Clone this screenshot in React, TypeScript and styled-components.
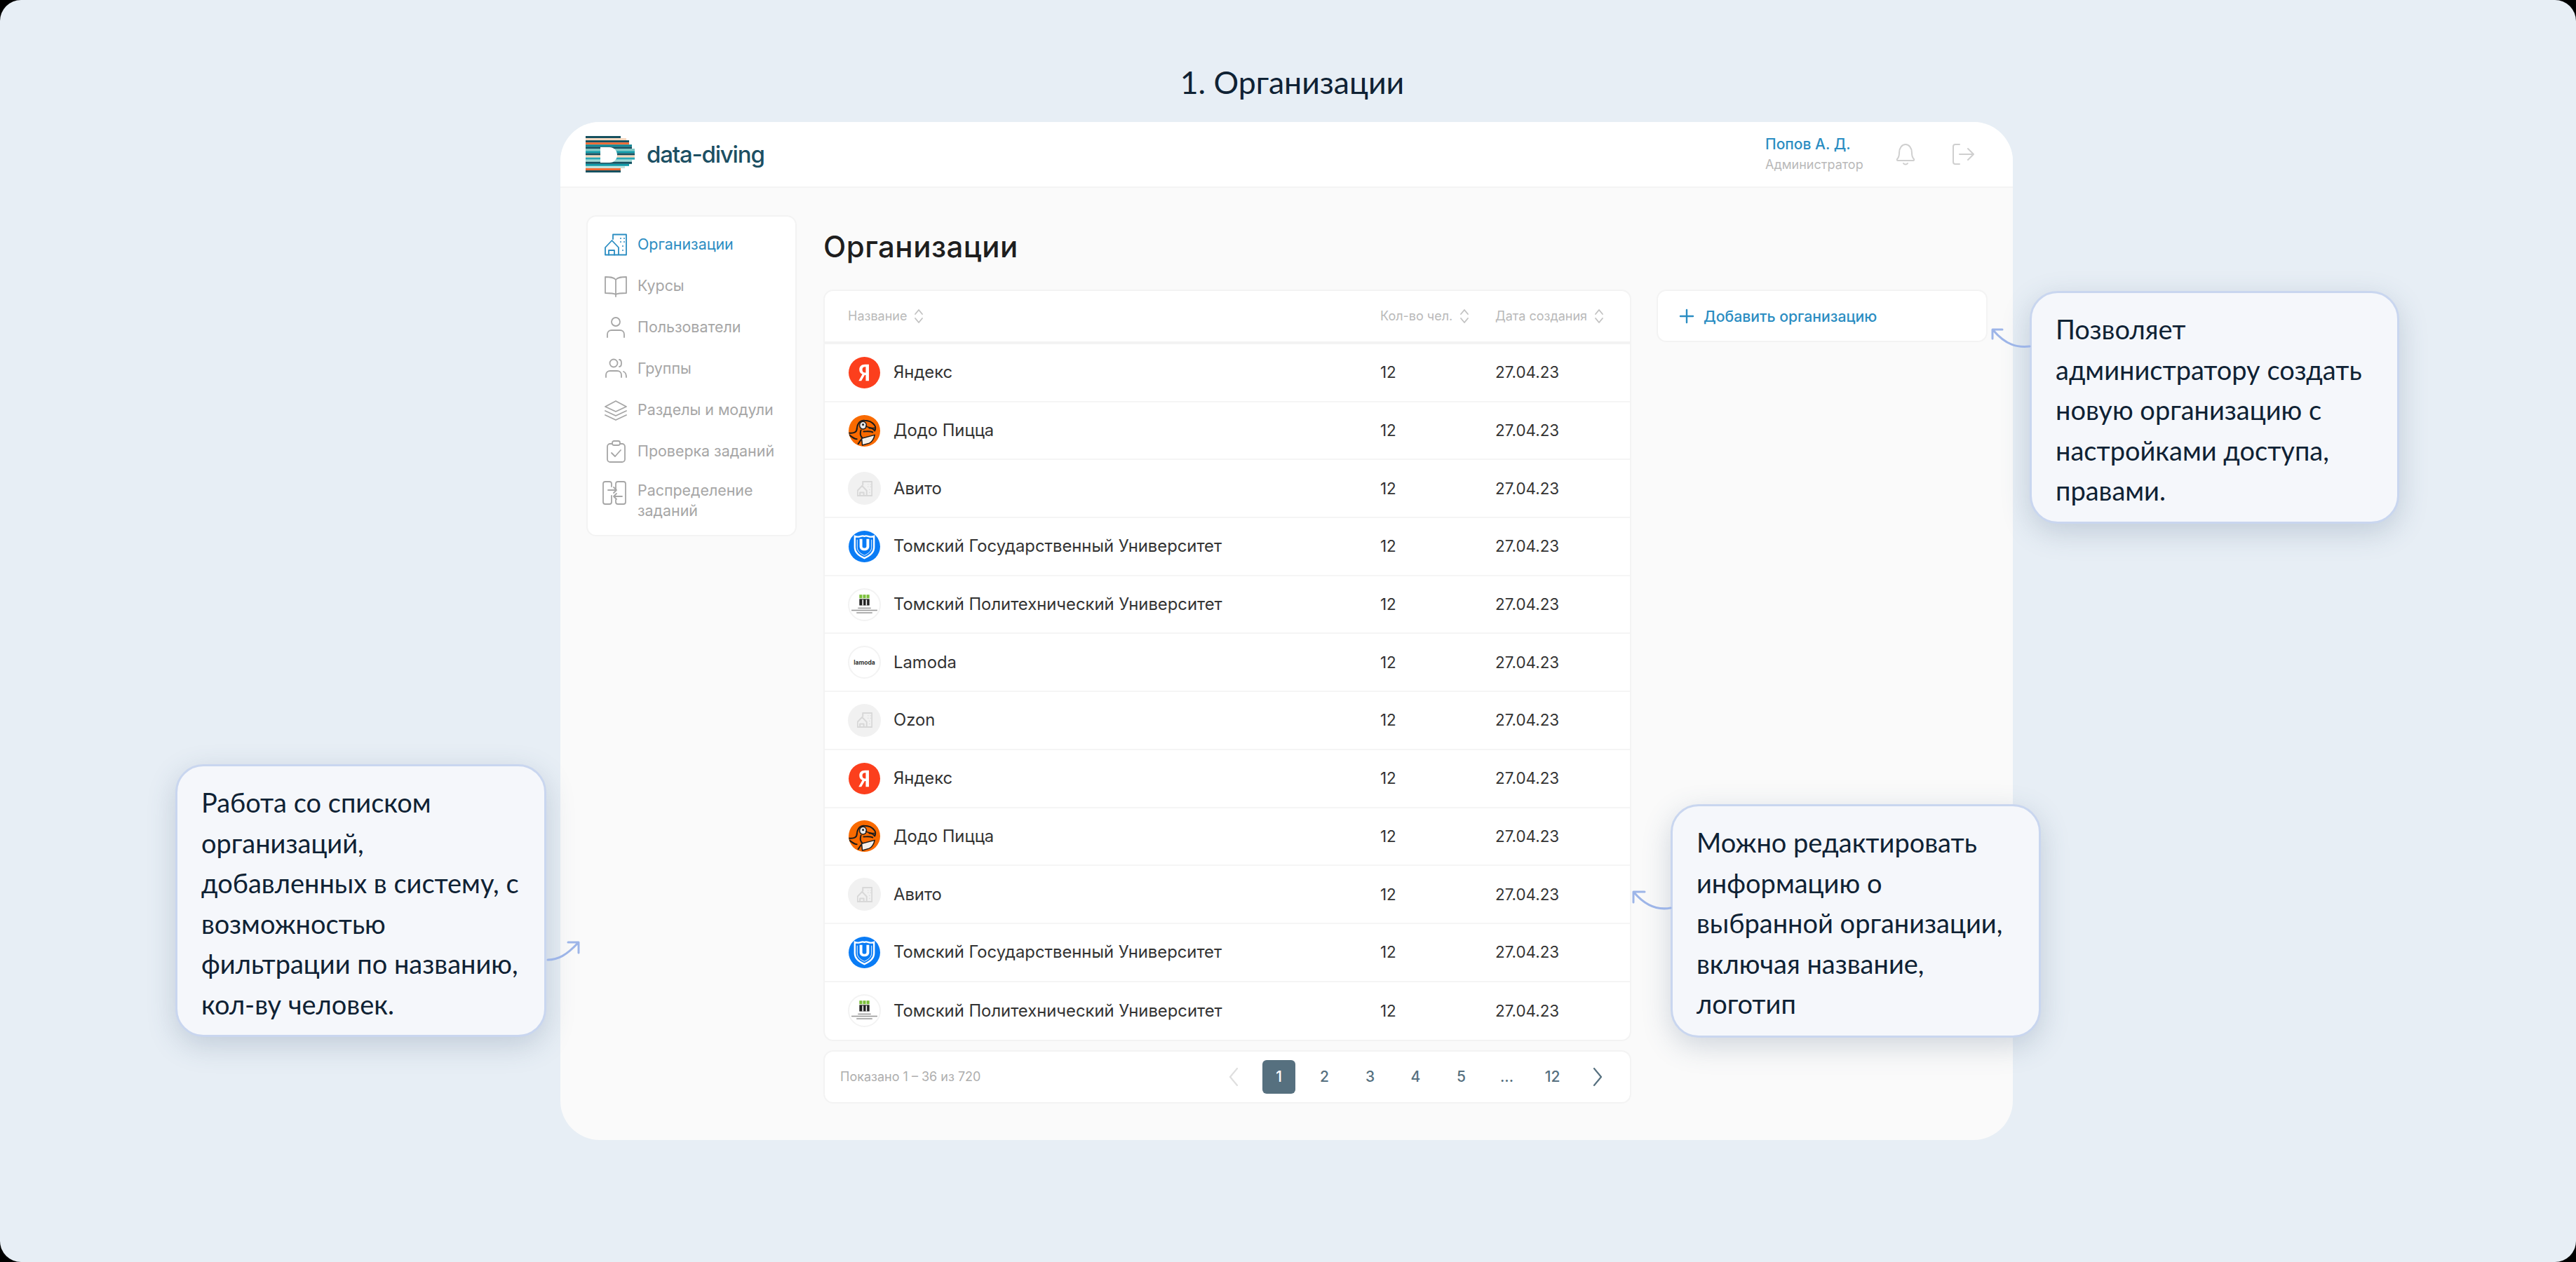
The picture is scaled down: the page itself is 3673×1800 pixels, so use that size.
import React from "react";
import styled, { createGlobalStyle } from "styled-components";

const Global = createGlobalStyle`
  html, body { margin: 0; padding: 0; background: #000; }
  * { box-sizing: border-box; }
`;

const ui = `Inter, "Noto Sans", sans-serif`;

const Page = styled.div`
  position: relative;
  width: 3673px;
  height: 1800px;
  background: #e7eef5;
  border-radius: 30px;
  overflow: hidden;
  display: flex;
  flex-direction: column;
  align-items: center;
`;
const PageTitle = styled.h1`
  margin: 0;
  padding: 90px 0 0 12px;
  height: 174px;
  font: 400 44.6px/54px Lato, sans-serif;
  color: #0f2234;
`;
const Frame = styled.div`
  width: 2071px;
  height: 1452px;
  margin-right: 4px;
  border-radius: 56px;
  background: #fafafa;
  overflow: hidden;
  display: flex;
  flex-direction: column;
`;
const Header = styled.header`
  height: 94px;
  flex: none;
  background: #fff;
  border-bottom: 2px solid #f4f4f4;
  display: flex;
  align-items: center;
  padding: 0 30px 0 36px;
`;
const Brand = styled.div`
  display: flex;
  align-items: center;
  gap: 17px;
  flex: 1;
  font: 500 33px/44px Inter, sans-serif;
  letter-spacing: -1.2px;
  color: #1c4f63;
`;
const User = styled.div`
  display: flex;
  flex-direction: column;
  gap: 4px;
  width: 159px;
`;
const UserName = styled.div`
  font: 500 21px/26px ${ui};
  color: #2b8dc2;
`;
const UserRole = styled.div`
  font: 400 18px/24px ${ui};
  color: #b9b9b9;
`;
const HeaderIcon = styled.div`
  width: 82px;
  display: flex;
  justify-content: center;
  color: #cfcfcf;
`;
const Body = styled.div`
  flex: 1;
  display: flex;
  padding: 39px 37px 0 37px;
`;
const Side = styled.nav`
  width: 300px;
  height: 458px;
  flex: none;
  background: #fff;
  border: 2px solid #f3f3f3;
  border-radius: 14px;
  padding: 10px 0 0 24px;
  display: flex;
  flex-direction: column;
`;
const NavItem = styled.div<{ $active?: boolean; $tall?: boolean }>`
  display: flex;
  align-items: ${(p) => (p.$tall ? "flex-start" : "center")};
  gap: 15px;
  height: ${(p) => (p.$tall ? 76 : 59)}px;
  padding-top: ${(p) => (p.$tall ? 12 : 0)}px;
  font: 400 21.4px/29px ${ui};
  color: ${(p) => (p.$active ? "#2b8dc2" : "#a6a6a6")};
  svg {
    flex: none;
    margin-left: ${(p) => (p.$tall ? -4 : 0)}px;
  }
`;
const Main = styled.main`
  width: 1152px;
  margin-left: 38px;
  flex: none;
`;
const Title = styled.h2`
  margin: 0;
  height: 106px;
  padding-top: 17px;
  font: 500 42px/56px ${ui};
  letter-spacing: 0.5px;
  color: #1e1e1e;
`;
const Table = styled.div`
  background: #fff;
  border: 2px solid #f3f3f3;
  border-radius: 14px;
  overflow: hidden;
`;
const Grid = styled.div`
  display: grid;
  grid-template-columns: 759px 164px 1fr;
  align-items: center;
  padding-left: 33px;
`;
const HeadRow = styled(Grid)`
  height: 76px;
  border-bottom: 4px solid #f3f3f3;
  font: 400 18px/24px ${ui};
  color: #b9b9b9;
`;
const HeadCell = styled.div`
  display: flex;
  align-items: center;
  gap: 10px;
`;
const Row = styled(Grid)`
  height: 82.7px;
  border-bottom: 2px solid #f5f5f5;
  font: 400 23.8px/30px ${ui};
  color: #333;
  &:last-child { border-bottom: 0; }
`;
const NameCell = styled.div`
  display: flex;
  align-items: center;
  gap: 18px;
`;
const Num = styled.div`
  font-size: 22.4px;
`;
const Pager = styled.div`
  margin-top: 13px;
  height: 76px;
  background: #fff;
  border: 2px solid #f3f3f3;
  border-radius: 14px;
  display: flex;
  align-items: center;
  justify-content: space-between;
  padding: 0 22px 0 22px;
`;
const PagerInfo = styled.div`
  font: 400 18px/24px ${ui};
  color: #aeaeae;
`;
const Pages = styled.div`
  display: flex;
  align-items: center;
  gap: 18px;
`;
const PageBtn = styled.div<{ $active?: boolean }>`
  width: 47px;
  height: 48px;
  border-radius: 6px;
  display: flex;
  align-items: center;
  justify-content: center;
  font: 500 21px/26px ${ui};
  background: ${(p) => (p.$active ? "#56707f" : "transparent")};
  color: ${(p) => (p.$active ? "#fff" : "#56707f")};
`;
const Aside = styled.div`
  width: 472px;
  height: 75px;
  flex: none;
  margin: 106px 0 0 36px;
  background: #fff;
  border: 2px solid #f3f3f3;
  border-radius: 14px;
  display: flex;
  align-items: center;
  gap: 13px;
  padding-left: 30px;
  font: 500 21.2px/28px ${ui};
  color: #2b8dc2;
`;
const Note = styled.div<{ $x: number; $y: number; $w: number; $h: number }>`
  position: absolute;
  left: ${(p) => p.$x}px;
  top: ${(p) => p.$y}px;
  width: ${(p) => p.$w}px;
  height: ${(p) => p.$h}px;
  background: #f5f7fb;
  border: 3px solid #c9d6ef;
  border-radius: 40px;
  box-shadow: 0 12px 40px rgba(60, 85, 120, 0.22);
  padding: 23px 24px 0 34px;
  font: 400 38px/57.6px Lato, sans-serif;
  color: #0f2234;
`;
const Arrow = styled.svg<{ $x: number; $y: number }>`
  position: absolute;
  left: ${(p) => p.$x}px;
  top: ${(p) => p.$y}px;
`;

const stripes = ["#15505f","#f7d9c0","#15505f","#f26a33","#0f8796","#15505f","#7cc8c4","#0f9aa8","#15505f","#f5d6b8","#2aa7b5","#9fdad6","#15505f","#0f9aa8","#bfe6e2","#f26a33","#15505f"];

const Logo = () => (
  <svg width="70" height="52" viewBox="0 0 70 52">
    <defs>
      <clipPath id="dshape">
        <path fillRule="evenodd" clipRule="evenodd" d="M0 0H50V3H58V6H62V12H66V18H70V34H66V40H62V43H56V46H50V52H0ZM21 16V38H34C41 38 45 33 45 27C45 21 41 16 34 16Z" />
      </clipPath>
    </defs>
    <g clipPath="url(#dshape)">
      {stripes.map((c, i) => (
        <rect key={i} x="0" y={i * 3.06} width="70" height="3.1" fill={c} />
      ))}
    </g>
  </svg>
);

const Stroke = (p: { size?: number; vb?: number; children: React.ReactNode; w?: number }) => (
  <svg width={p.size ?? 32} height={p.size ?? 32} viewBox={`0 0 ${p.vb ?? 32} ${p.vb ?? 32}`} fill="none" stroke="currentColor" strokeWidth={p.w ?? 1.8} strokeLinecap="round" strokeLinejoin="round">
    {p.children}
  </svg>
);

const OrgIcon = ({ size = 32, w = 1.8 }: { size?: number; w?: number }) => (
  <Stroke size={size} w={w}>
    <path d="M12 8V1.500H31V30.500H1V20L10.500 10L20 20V30.500" />
    <path d="M6 30.500V24H14V30.500" />
    <path d="M23 7h.01M28 7h.01M23 12h.01M28 12h.01M26 18h.01M26 24h.01" strokeWidth="2" />
  </Stroke>
);

const icons: Record<string, React.ReactNode> = {
  org: <OrgIcon />,
  book: (
    <Stroke>
      <path d="M16 7C13 3 7 3 1 3V26C7 26 13 26 16 28C19 26 25 26 31 26V3C25 3 19 3 16 7ZM16 7V31" />
    </Stroke>
  ),
  user: (
    <Stroke>
      <circle cx="16" cy="8" r="6" />
      <path d="M4 30V26C4 22 7 20 10 20H22C25 20 28 22 28 26V30" />
    </Stroke>
  ),
  group: (
    <Stroke>
      <circle cx="13" cy="8" r="5.500" />
      <path d="M2 28V25C2 21 5 19 8 19H18C21 19 24 21 24 25V28M21 3C25 3 25 13 21 13M27 20C30 21 31 24 31 28" />
    </Stroke>
  ),
  layers: (
    <Stroke>
      <path d="M16 3L31 11L16 18L1 11Z" />
      <path d="M1 17L16 24L31 17M1 23L16 30L31 23" />
    </Stroke>
  ),
  check: (
    <Stroke>
      <rect x="4" y="5" width="25" height="26" rx="4" />
      <rect x="11" y="1" width="11" height="6" rx="2.500" fill="#fff" />
      <path d="M10 18L15 23L23 14" />
    </Stroke>
  ),
  swap: (
    <Stroke size={36} vb={36}>
      <path d="M14 9V5C14 3 13 2 11 2H5C3 2 2 3 2 5V31C2 33 3 34 5 34H11C13 34 14 33 14 31V22" />
      <path d="M20 14V5C20 3 21 2 23 2H31C33 2 34 3 34 5V31C34 33 33 34 31 34H23C21 34 20 33 20 31V28" />
      <path d="M9 14H21M17 10L21 14L17 18M29 23H17M21 19L17 23L21 27" />
    </Stroke>
  ),
};

const nav = [
  { i: "org", t: "Организации", a: true },
  { i: "book", t: "Курсы" },
  { i: "user", t: "Пользователи" },
  { i: "group", t: "Группы" },
  { i: "layers", t: "Разделы и модули" },
  { i: "check", t: "Проверка заданий" },
];

const Avatar = styled.div<{ $bg: string; $ring?: boolean; $small?: boolean }>`
  width: ${(p) => (p.$small ? 45 : 47)}px;
  height: ${(p) => (p.$small ? 45 : 47)}px;
  margin: 0 ${(p) => (p.$small ? 1 : 0)}px;
  flex: none;
  border-radius: 50%;
  background: ${(p) => p.$bg};
  border: ${(p) => (p.$ring ? "2px solid #f3f3f3" : "0")};
  display: flex;
  align-items: center;
  justify-content: center;
  overflow: hidden;
  color: #d8d8d8;
`;

const YandexLogo = () => (
  <Avatar $bg="#fc3f1d" $small>
    <svg width="45" height="45" viewBox="0 0 46 46">
      <path fill="#fff" d="M25 35V26.500H23.400L18.600 35H14.600L20 25.400C17.200 24.200 15.600 21.800 15.600 18.600C15.600 13.800 18.800 11 24 11H29.600V35ZM25 14.600H24C21.400 14.600 20 16 20 18.600C20 21.400 21.400 22.900 24.200 22.900H25Z" />
    </svg>
  </Avatar>
);
const DodoLogo = () => (
  <Avatar $bg="#f96a00" $small>
    <svg width="45" height="45" viewBox="0 0 46 46" fill="none" strokeLinejoin="round" strokeLinecap="round">
      <path d="M19 34L38 29C37 35 33 40 30 41L20 44Z" fill="#f4efe8" stroke="#1b1b1b" strokeWidth="1.500" />
      <path d="M12 20C13 11 18 7 23 8C29 8 35 11 38 15C40 18 39 21 38 23C36 20 34 19 30 19" stroke="#1b1b1b" strokeWidth="2" />
      <ellipse cx="21" cy="15" rx="5" ry="5.500" fill="#e8e8e8" stroke="#1b1b1b" strokeWidth="1.500" />
      <circle cx="21" cy="14" r="1.500" fill="#1b1b1b" />
      <path d="M25 16C28 18 34 19 38 19" stroke="#1b1b1b" strokeWidth="1.500" />
      <path d="M12 20C12 25 8 27 0 26M1 29C5 32 8 35 12 35M22 24C26 24 31 23 35 25M18 22C16 28 18 32 20 33M18 36L14 42" stroke="#1b1b1b" strokeWidth="2" />
    </svg>
  </Avatar>
);
const GhostLogo = () => (
  <Avatar $bg="#f1f1f1">
    <OrgIcon size={22} w={3} />
  </Avatar>
);
const TsuLogo = () => (
  <Avatar $bg="#0a7cf5" $small>
    <svg width="45" height="45" viewBox="0 0 46 46" fill="none">
      <path d="M9 8C15 11 18 6 23 8C28 6 31 11 37 8V24C37 32 30 37 23 40C16 37 9 32 9 24Z" stroke="#fff" strokeWidth="2.400" />
      <path d="M12.500 13V24C12.500 30 18 34 23 36C28 34 33.500 30 33.500 24V13" stroke="#fff" strokeWidth="1" />
      <path d="M16 12V23C16 31 30 31 30 23V12H26V23C26 26 20 26 20 23V12Z" fill="#fff" />
    </svg>
  </Avatar>
);
const TpuLogo = () => (
  <Avatar $bg="#fff" $ring>
    <svg width="43" height="43" viewBox="0 0 42 42">
      <rect x="14" y="7" width="4" height="5" fill="#7bbf3a" />
      <rect x="19" y="7" width="4" height="5" fill="#7bbf3a" />
      <rect x="24" y="7" width="4" height="5" fill="#7bbf3a" />
      <rect x="14" y="13" width="14" height="9" fill="#222" />
      <rect x="18" y="14" width="1.600" height="8" fill="#fff" />
      <rect x="23" y="14" width="1.600" height="8" fill="#fff" />
      <rect x="12" y="25" width="18" height="1.500" fill="#999" />
      <rect x="3" y="28" width="36" height="1.600" fill="#999" />
      <rect x="10" y="31.500" width="22" height="1.500" fill="#999" />
    </svg>
  </Avatar>
);
const LamodaMark = styled.span`
  font: 700 8.5px/10px ${ui};
  color: #333;
`;
const LamodaLogo = () => (
  <Avatar $bg="#fff" $ring>
    <LamodaMark>lamoda</LamodaMark>
  </Avatar>
);

const rows: [React.ReactNode, string][] = [
  [<YandexLogo />, "Яндекс"],
  [<DodoLogo />, "Додо Пицца"],
  [<GhostLogo />, "Авито"],
  [<TsuLogo />, "Томский Государственный Университет"],
  [<TpuLogo />, "Томский Политехнический Университет"],
  [<LamodaLogo />, "Lamoda"],
  [<GhostLogo />, "Ozon"],
  [<YandexLogo />, "Яндекс"],
  [<DodoLogo />, "Додо Пицца"],
  [<GhostLogo />, "Авито"],
  [<TsuLogo />, "Томский Государственный Университет"],
  [<TpuLogo />, "Томский Политехнический Университет"],
];

const Sort = () => (
  <svg width="14" height="22" viewBox="0 0 14 22" fill="none" stroke="#c2c2c2" strokeWidth="1.800" strokeLinecap="round" strokeLinejoin="round">
    <path d="M2 8L7 2L12 8M2 14L7 20L12 14" />
  </svg>
);

const Chevron = ({ d, color }: { d: string; color: string }) => (
  <svg width="47" height="48" viewBox="0 0 47 48" fill="none" stroke={color} strokeWidth="2.200" strokeLinecap="round" strokeLinejoin="round">
    <path d={d} />
  </svg>
);

const CurveArrow = (p: { x: number; y: number; d: string; w: number; h: number }) => (
  <Arrow $x={p.x} $y={p.y} width={p.w} height={p.h} viewBox={`0 0 ${p.w} ${p.h}`} fill="none" stroke="#9db5e8" strokeWidth="3" strokeLinecap="round" strokeLinejoin="round">
    <path d={p.d} />
  </Arrow>
);

export default function App() {
  return (
    <Page>
      <Global />
      <PageTitle>1. Организации</PageTitle>
      <Frame>
        <Header>
          <Brand>
            <Logo />
            data-diving
          </Brand>
          <User>
            <UserName>Попов А. Д.</UserName>
            <UserRole>Администратор</UserRole>
          </User>
          <HeaderIcon>
            <Stroke size={34} vb={34} w={2}>
              <path d="M5 24C7 22 8 19 8 15C8 8 12 3 17 3C22 3 26 8 26 15C26 19 27 22 29 24C29.500 25 29 26 28 26H6C5 26 4.500 25 5 24Z" />
              <path d="M14 30C15.500 32 18.500 32 20 30" />
            </Stroke>
          </HeaderIcon>
          <HeaderIcon>
            <Stroke size={34} vb={34} w={2}>
              <path d="M12 3H6C4 3 3 4 3 6V28C3 30 4 31 6 31H12" />
              <path d="M12 17H32M24 9L32 17L24 25" />
            </Stroke>
          </HeaderIcon>
        </Header>
        <Body>
          <Side>
            {nav.map((n) => (
              <NavItem key={n.t} $active={n.a}>
                {icons[n.i]}
                {n.t}
              </NavItem>
            ))}
            <NavItem $tall>
              {icons.swap}
              <span>Распределение заданий</span>
            </NavItem>
          </Side>
          <Main>
            <Title>Организации</Title>
            <Table>
              <HeadRow>
                <HeadCell>Название <Sort /></HeadCell>
                <HeadCell>Кол-во чел. <Sort /></HeadCell>
                <HeadCell>Дата создания <Sort /></HeadCell>
              </HeadRow>
              {rows.map(([logo, name], i) => (
                <Row key={i}>
                  <NameCell>
                    {logo}
                    {name}
                  </NameCell>
                  <Num>12</Num>
                  <Num>27.04.23</Num>
                </Row>
              ))}
            </Table>
            <Pager>
              <PagerInfo>Показано 1 – 36 из 720</PagerInfo>
              <Pages>
                <Chevron d="M29 12L19 24L29 36" color="#dfdfdf" />
                <PageBtn $active>1</PageBtn>
                <PageBtn>2</PageBtn>
                <PageBtn>3</PageBtn>
                <PageBtn>4</PageBtn>
                <PageBtn>5</PageBtn>
                <PageBtn>...</PageBtn>
                <PageBtn>12</PageBtn>
                <Chevron d="M18 12L28 24L18 36" color="#56707f" />
              </Pages>
            </Pager>
          </Main>
          <Aside>
            <Stroke size={22} vb={22} w={2.400}>
              <path d="M11 2V20M2 11H20" />
            </Stroke>
            Добавить организацию
          </Aside>
        </Body>
      </Frame>

      <Note $x={2894} $y={415} $w={527} $h={332}>
        Позволяет администратору создать новую организацию с настройками доступа, правами.
      </Note>
      <CurveArrow x={2838} y={466} w={58} h={32} d="M56 28C38 30 22 26 4 5M3 17L3 4L17 4" />
      <Note $x={250} $y={1090} $w={529} $h={389}>
        Работа со списком организаций, добавленных в систему, с возможностью фильтрации по названию, кол-ву человек.
      </Note>
      <CurveArrow x={778} y={1340} w={50} h={32} d="M3 29C18 29 30 22 46 5M32 4H47V19" />
      <Note $x={2382} $y={1147} $w={528} $h={333}>
        Можно редактировать информацию о выбранной организации, включая название, логотип
      </Note>
      <CurveArrow x={2326} y={1268} w={58} h={32} d="M56 27C40 30 22 26 4 5M3 19L3 4L19 4" />
    </Page>
  );
}
